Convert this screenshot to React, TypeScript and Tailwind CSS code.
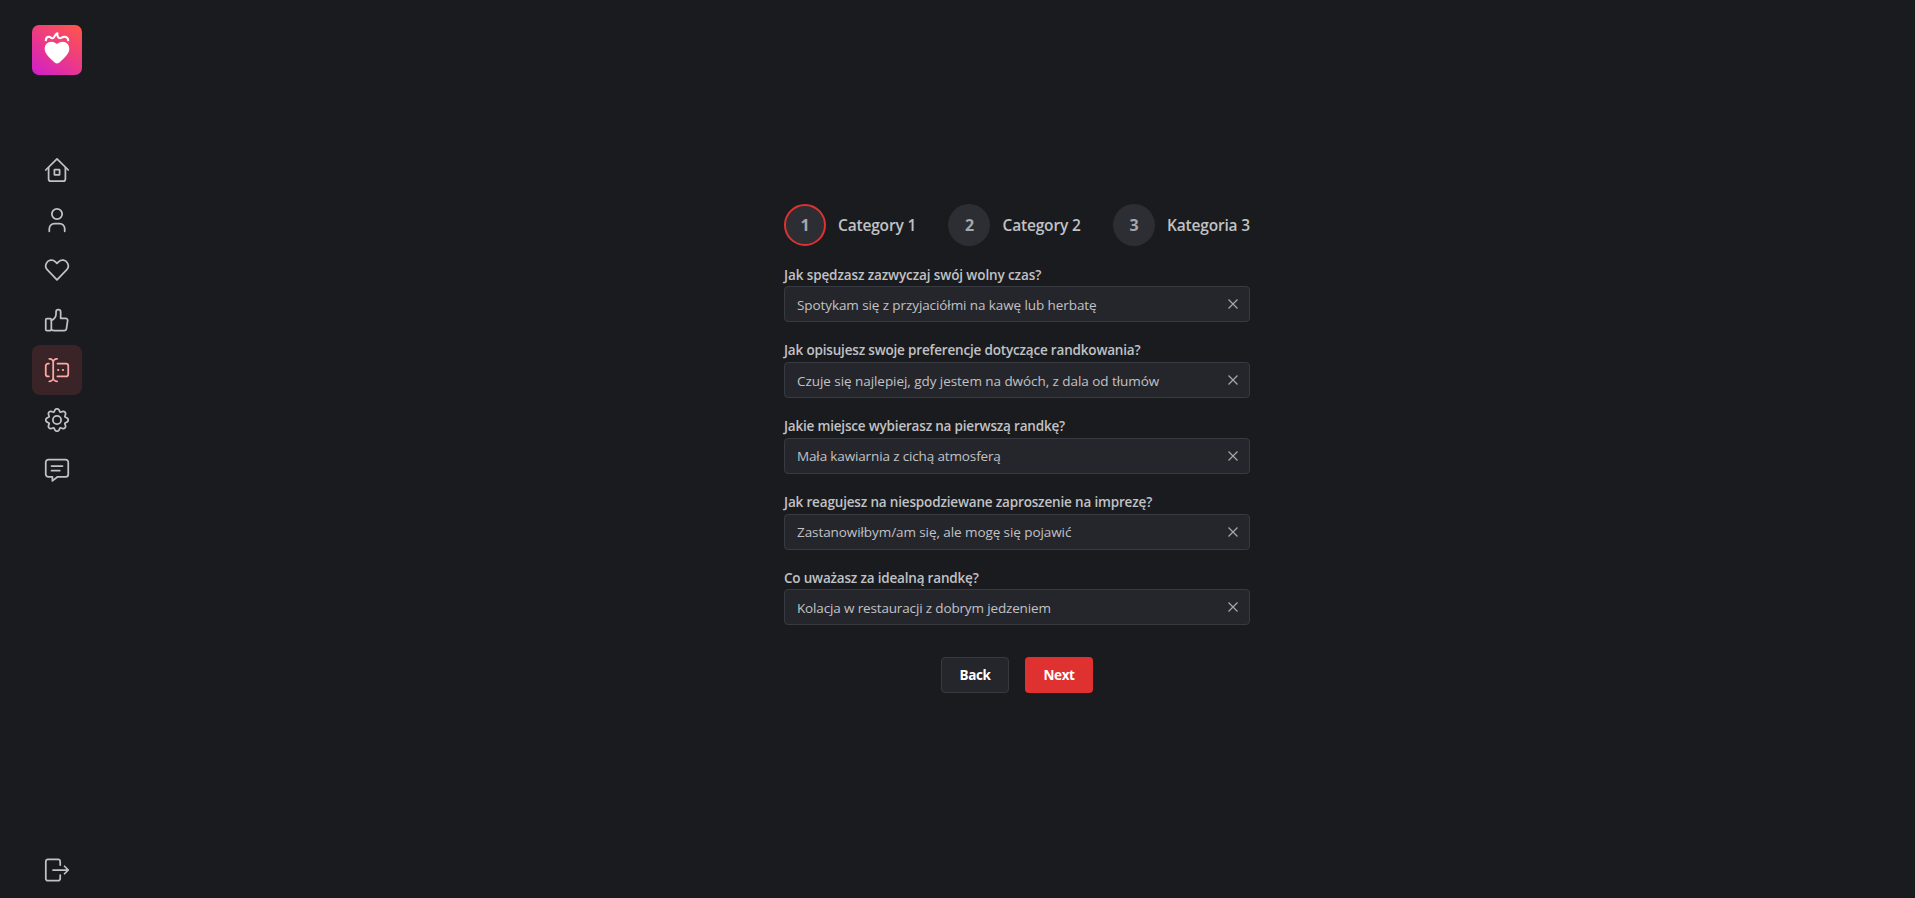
import type { ReactNode } from "react";

const gearPath = (() => {
  const points: string[] = [];
  for (let i = 0; i < 144; i++) {
    const t = (i / 144) * Math.PI * 2;
    const r = 10.05 + 1.35 * Math.cos(8 * t) - 0.2 * Math.cos(16 * t);
    points.push(`${(12 + r * Math.sin(t)).toFixed(2)} ${(12 - r * Math.cos(t)).toFixed(2)}`);
  }
  return `M${points.join("L")}Z`;
})();

const icons: { name: string; body: ReactNode; active?: boolean }[] = [
  {
    name: "Home",
    body: (
      <>
        <path d="M.75 12 12 .9 23.25 12" />
        <path d="M3.6 9.6v11.4a2.2 2.2 0 0 0 2.2 2.2h12.4a2.2 2.2 0 0 0 2.2-2.2V9.6" />
        <rect x="9.4" y="11.6" width="5.2" height="5.2" rx=".4" />
      </>
    ),
  },
  {
    name: "Profile",
    body: (
      <>
        <circle cx="12" cy="5.9" r="5.15" />
        <path d="M4.3 23.25v-2.6a5 5 0 0 1 5-5h5.4a5 5 0 0 1 5 5v2.6" />
      </>
    ),
  },
  {
    name: "Matches",
    body: (
      <path d="M12 21.844l-9.588-10a5.672 5.672 0 0 1-1.063-6.551 5.673 5.673 0 0 1 9.085-1.474L12 5.384l1.566-1.565a5.673 5.673 0 0 1 9.085 1.474 5.673 5.673 0 0 1-1.062 6.548Z" />
    ),
  },
  {
    name: "Likes",
    body: (
      <>
        <rect x=".75" y="10.6" width="5.6" height="12" rx="1.2" />
        <path d="M6.35 12.4c3.1-1.1 4.7-3.2 4.7-6.6V3.9a2.3 2.3 0 0 1 4.6 0v6.4h4.9a2.1 2.1 0 0 1 2.1 2.4l-1.2 7.9a2.3 2.3 0 0 1-2.3 2H9.4c-1.2 0-2.1-.3-3.05-.9" />
      </>
    ),
  },
  {
    name: "Questionnaire",
    active: true,
    body: (
      <>
        <path d="M3.9 5.6H3A2.25 2.25 0 0 0 .75 7.85v8.3A2.25 2.25 0 0 0 3 18.4h.9M12.4 5.6H21a2.25 2.25 0 0 1 2.25 2.25v8.3A2.25 2.25 0 0 1 21 18.4h-8.6" />
        <path d="M4.3.75h.4A3.5 3.5 0 0 1 8.2 4.2v15.6a3.5 3.5 0 0 1-3.5 3.45h-.4M12.1.75h-.4A3.5 3.5 0 0 0 8.2 4.2M12.1 23.25h-.4a3.5 3.5 0 0 1-3.5-3.45" />
        <path d="M13.1 12h.2M17.9 12h.2" strokeWidth="2" />
      </>
    ),
  },
  {
    name: "Settings",
    body: (
      <>
        <path d={gearPath} />
        <circle cx="12" cy="12" r="4.1" />
      </>
    ),
  },
  {
    name: "Messages",
    body: (
      <>
        <path d="M20.6 1.7H3.4A2.65 2.65 0 0 0 .75 4.35v11.8A2.65 2.65 0 0 0 3.4 18.8h4v4.1l5.2-4.1h8a2.65 2.65 0 0 0 2.65-2.65V4.35A2.65 2.65 0 0 0 20.6 1.7Z" />
        <path d="M6.5 8h11M6.5 12.7h8.2" />
      </>
    ),
  },
];

function Icon({ children }: { children: ReactNode }) {
  return (
    <svg
      viewBox="0 0 24 24"
      className="size-6 overflow-visible"
      fill="none"
      stroke="currentColor"
      strokeWidth="1.75"
      strokeLinecap="round"
      strokeLinejoin="round"
    >
      {children}
    </svg>
  );
}

function Logo() {
  return (
    <svg viewBox="0 0 50 50" className="size-[50px]">
      <defs>
        <linearGradient id="logo-bg" x1="0.85" y1="0" x2="0.15" y2="1">
          <stop offset="0" stopColor="#fd544f" />
          <stop offset="0.5" stopColor="#ec3a86" />
          <stop offset="1" stopColor="#d321c4" />
        </linearGradient>
      </defs>
      <rect width="50" height="50" rx="7" fill="url(#logo-bg)" />
      <path
        d="M25 38.6c-1.4 0-2.7-1.2-4-2.5C16.5 31.8 12.7 28.5 12.7 23.8c0-4 2.8-7.1 6.7-7.1 2.3 0 4.3 1 5.6 2.4 1.3-1.4 3.3-2.4 5.6-2.4 3.9 0 6.7 3.1 6.7 7.1 0 4.7-3.8 8-8.3 12.3-1.3 1.3-2.6 2.5-4 2.5Z"
        fill="#fff"
      />
      <path
        d="M13.8 15.3c.2-2.5 1.5-3.5 3.2-3.5 1.5 0 2.2 1.5 3.5 1.5 2.3 0 2.2-4.5 4.9-5-.4 2.7.8 4.9 2.7 4.9 1.5 0 2-1.5 4.2-1.5 2.3 0 3.7 1.2 3.9 3.6"
        fill="none"
        stroke="#fff"
        strokeWidth="2.1"
        strokeLinecap="round"
        strokeLinejoin="round"
      />
    </svg>
  );
}

const steps = [
  { label: "Category 1", active: true },
  { label: "Category 2", active: false },
  { label: "Kategoria 3", active: false },
];

const questions = [
  {
    label: "Jak spędzasz zazwyczaj swój wolny czas?",
    labelTracking: "tracking-[-0.11px]",
    value: "Spotykam się z przyjaciółmi na kawę lub herbatę",
    valueTracking: "tracking-[-0.09px]",
  },
  {
    label: "Jak opisujesz swoje preferencje dotyczące randkowania?",
    labelTracking: "tracking-[-0.18px]",
    value: "Czuje się najlepiej, gdy jestem na dwóch, z dala od tłumów",
    valueTracking: "tracking-[-0.055px]",
  },
  {
    label: "Jakie miejsce wybierasz na pierwszą randkę?",
    labelTracking: "tracking-[-0.19px]",
    value: "Mała kawiarnia z cichą atmosferą",
    valueTracking: "tracking-[-0.14px]",
  },
  {
    label: "Jak reagujesz na niespodziewane zaproszenie na imprezę?",
    labelTracking: "tracking-[-0.165px]",
    value: "Zastanowiłbym/am się, ale mogę się pojawić",
    valueTracking: "tracking-[-0.08px]",
  },
  {
    label: "Co uważasz za idealną randkę?",
    labelTracking: "tracking-[-0.19px]",
    value: "Kolacja w restauracji z dobrym jedzeniem",
    valueTracking: "tracking-[-0.15px]",
  },
];

function Sidebar() {
  return (
    <nav className="flex w-[114px] shrink-0 flex-col items-center pt-[25px] pb-[3px]">
      <Logo />
      <div className="mt-[70px] flex flex-col">
        {icons.map((icon) => (
          <button
            key={icon.name}
            aria-label={icon.name}
            className={
              icon.active
                ? "flex size-[50px] items-center justify-center rounded-lg bg-[#3b2427] text-[#ffa8a8]"
                : "flex size-[50px] items-center justify-center rounded-lg text-[#c1c2c5]"
            }
          >
            <Icon>{icon.body}</Icon>
          </button>
        ))}
      </div>
      <button
        aria-label="Logout"
        className="mt-auto flex size-[50px] items-center justify-center text-[#c1c2c5]"
      >
        <Icon>
          <path d="M15.2 7V3.4a2.1 2.1 0 0 0-2.1-2.1H2.9A2.1 2.1 0 0 0 .8 3.4v17.2a2.1 2.1 0 0 0 2.1 2.1h10.2a2.1 2.1 0 0 0 2.1-2.1V17M8 12h15.25M19.5 8.25 23.25 12l-3.75 3.75" />
        </Icon>
      </button>
    </nav>
  );
}

export default function App() {
  return (
    <div className="flex h-[898px] w-full overflow-hidden bg-[#1a1b1e] font-['Open_Sans',sans-serif] text-[#c1c2c5]">
      <Sidebar />
      <main className="flex flex-1 justify-center">
        <div className="mr-[665px] ml-[670px] flex w-[466px] shrink-0 flex-col pt-[204px]">
          <div className="flex justify-between">
            {steps.map((step, i) => (
              <div key={step.label} className="flex items-center gap-3">
                <div
                  className={
                    step.active
                      ? "flex size-[42px] items-center justify-center rounded-full border-2 border-[#e03131] bg-[#2c2e33] pb-px text-base font-bold text-[#a6a7ab]"
                      : "flex size-[42px] items-center justify-center rounded-full bg-[#2c2e33] pb-px text-base font-bold text-[#a6a7ab]"
                  }
                >
                  {i + 1}
                </div>
                <span className="pt-px text-[15.5px] leading-[17px] font-semibold tracking-[-0.17px] whitespace-nowrap">
                  {step.label}
                </span>
              </div>
            ))}
          </div>
          <div className="mt-[18.75px] flex flex-col gap-[18px]">
            {questions.map((q) => (
              <div key={q.label}>
                <div className="h-[21.7px] text-[13.5px] leading-[20.5px] font-semibold whitespace-nowrap">
                  <span className={q.labelTracking}>{q.label}</span>
                </div>
                <div className="flex h-9 items-center justify-between rounded border border-[#373a40] bg-[#25262b] pr-[10px] pl-3">
                  <span className="pt-[1.5px] text-[13.5px] whitespace-nowrap">
                    <span className={q.valueTracking}>{q.value}</span>
                  </span>
                  <svg
                    viewBox="0 0 12 12"
                    className="size-3 text-[#a6a7ab]"
                    fill="none"
                    stroke="currentColor"
                    strokeWidth="1.2"
                  >
                    <path d="m1.5 1.5 9 9m0-9-9 9" />
                  </svg>
                </div>
              </div>
            ))}
          </div>
          <div className="mt-8 flex justify-center gap-4">
            <button className="h-9 w-[68px] rounded border border-[#373a40] bg-[#25262b] text-[13.5px] font-bold tracking-[-0.4px] text-white">
              Back
            </button>
            <button className="h-9 w-[68px] rounded bg-[#e03131] text-[13.5px] font-bold tracking-[-0.4px] text-white">
              Next
            </button>
          </div>
        </div>
      </main>
    </div>
  );
}
